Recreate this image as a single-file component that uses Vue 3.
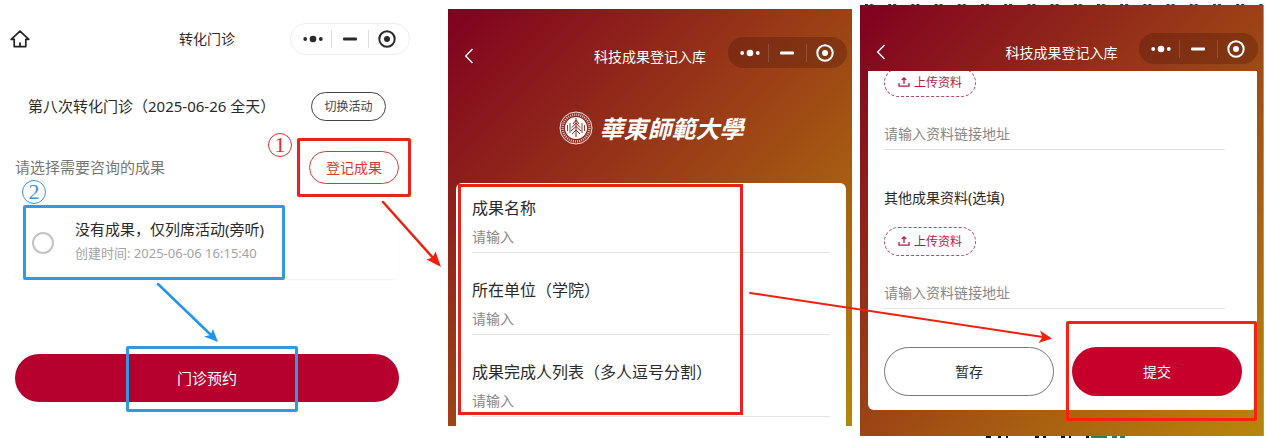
<script setup>
import { ref } from 'vue';

const attend = ref(false);

// Second screen: the form fields
const fields = ref([
  { id: 'name', label: '成果名称', value: '' },
  { id: 'unit', label: '所在单位（学院）', value: '' },
  { id: 'members', label: '成果完成人列表（多人逗号分割）', value: '' },
]);

const link = ref('');
const otherLink = ref('');
</script>

<template>
  <div class="board">
    <!-- Shared icons -->
    <svg class="sprite" aria-hidden="true">
      <symbol id="dots" viewBox="0 0 20 10">
        <circle cx="2.2" cy="5" r="1.9" fill="currentColor" />
        <circle cx="10" cy="5" r="3.3" fill="currentColor" />
        <circle cx="17.8" cy="5" r="1.9" fill="currentColor" />
      </symbol>
      <symbol id="minus" viewBox="0 0 14 4">
        <rect width="14" height="3" y=".5" rx="1" fill="currentColor" />
      </symbol>
      <symbol id="target" viewBox="0 0 18 18">
        <circle cx="9" cy="9" r="7.7" fill="none" stroke="currentColor" stroke-width="2" />
        <circle cx="9" cy="9" r="3" fill="currentColor" />
      </symbol>
      <symbol id="back" viewBox="0 0 10 16">
        <path d="M8.500 1L1.700 8l6.800 7" fill="none" stroke="currentColor" stroke-width="1.4" />
      </symbol>
      <symbol id="upload" viewBox="0 0 12 12">
        <path d="M1 7v3.2h10V7M6 8V2M3.8 4L6 1.8 8.2 4" fill="none" stroke="currentColor" stroke-width="1.3" />
      </symbol>
    </svg>

    <!-- Clinic screen -->
    <section class="screen clinic">
      <header class="nav">
        <button class="nav-icon" aria-label="首页">
          <svg width="20" height="18" viewBox="0 0 20 18">
            <path d="M10 1.2L1.2 9.3h3V16.6h11.6V9.3h3z" fill="none" stroke="#222" stroke-width="1.7" stroke-linejoin="round" />
            <path d="M10 12.5v4" stroke="#222" stroke-width="1.8" />
          </svg>
        </button>
        <h1 class="nav-title">转化门诊</h1>
        <div class="capsule">
          <button aria-label="更多"><svg width="20" height="10"><use href="#dots" /></svg></button>
          <button aria-label="最小化"><svg width="14" height="4"><use href="#minus" /></svg></button>
          <button aria-label="关闭"><svg width="18" height="18"><use href="#target" /></svg></button>
        </div>
      </header>

      <div class="event">
        <h2 class="event-title">第八次转化门诊（2025-06-26 全天）</h2>
        <button class="pill switch">切换活动</button>
      </div>

      <div class="choose">
        <span class="choose-label">请选择需要咨询的成果</span>
        <div class="marked">
          <button class="pill register">登记成果</button>
          <span class="mark mark-register"></span>
          <span class="step step-one">1</span>
        </div>
      </div>

      <label class="option">
        <input v-model="attend" type="radio" :value="true" name="result">
        <span class="option-text">
          <span class="option-title">没有成果，仅列席活动(旁听)</span>
          <span class="option-time">创建时间: 2025-06-06 16:15:40</span>
        </span>
        <span class="mark mark-option"></span>
        <span class="step step-two">2</span>
      </label>

      <div class="marked book">
        <button class="book-button">门诊预约</button>
        <span class="mark mark-book"></span>
      </div>
    </section>

    <!-- Registration screen, top of the form -->
    <section class="screen themed form-top">
      <header class="nav">
        <button class="nav-icon" aria-label="返回"><svg width="10" height="16"><use href="#back" /></svg></button>
        <h1 class="nav-title">科技成果登记入库</h1>
        <div class="capsule">
          <button aria-label="更多"><svg width="20" height="10"><use href="#dots" /></svg></button>
          <button aria-label="最小化"><svg width="14" height="4"><use href="#minus" /></svg></button>
          <button aria-label="关闭"><svg width="18" height="18"><use href="#target" /></svg></button>
        </div>
      </header>

      <div class="brand">
        <svg width="34" height="34" viewBox="0 0 34 34" fill="none" stroke="#fff">
          <circle cx="17" cy="17" r="16" stroke-width=".9" />
          <circle cx="17" cy="17" r="13.4" stroke-width="2.4" stroke-dasharray="1 1.1" opacity=".75" />
          <circle cx="17" cy="17" r="11" fill="#fff" stroke="none" />
          <g stroke="#8e2219" stroke-width="1">
            <path d="M17 7v19M17 9l-3 4M17 9l3 4M17 12l-4 4.500M17 12l4 4.500M17 15.500l-5 4.500M17 15.500l5 4.500M17 19l-4 4M17 19l4 4" />
            <path d="M11 12v10M23 12v10M8.500 14v6M25.500 14v6" stroke-width=".9" />
          </g>
        </svg>
        <span class="brand-name">華東師範大學</span>
      </div>

      <form class="card fields" @submit.prevent>
        <div v-for="field in fields" :key="field.id" class="field">
          <label :for="field.id">{{ field.label }}</label>
          <input :id="field.id" v-model="field.value" type="text" placeholder="请输入">
        </div>
        <span class="mark mark-fields"></span>
      </form>
    </section>

    <!-- Registration screen, end of the form -->
    <div class="last">
      <!-- Edge of the ruler above the screen -->
      <svg class="ruler" aria-hidden="true">
        <defs>
          <pattern id="ticks" x="5" width="23.200" height="5" patternUnits="userSpaceOnUse">
            <path d="M0 4.500h3M5 4.500h3" stroke="#333" stroke-width="1" />
          </pattern>
        </defs>
        <rect width="100%" height="5" fill="url(#ticks)" />
      </svg>
      <section class="screen themed form-end">
        <header class="nav">
          <button class="nav-icon" aria-label="返回"><svg width="10" height="16"><use href="#back" /></svg></button>
          <h1 class="nav-title">科技成果登记入库</h1>
          <div class="capsule">
            <button aria-label="更多"><svg width="20" height="10"><use href="#dots" /></svg></button>
            <button aria-label="最小化"><svg width="14" height="4"><use href="#minus" /></svg></button>
            <button aria-label="关闭"><svg width="18" height="18"><use href="#target" /></svg></button>
          </div>
        </header>

        <form class="card uploads" @submit.prevent>
          <div class="scroll">
            <button type="button" class="upload">
              <svg width="12" height="12"><use href="#upload" /></svg>上传资料
            </button>
            <input v-model="link" type="text" aria-label="资料链接地址" placeholder="请输入资料链接地址">
            <label for="other">其他成果资料(选填)</label>
            <button type="button" class="upload">
              <svg width="12" height="12"><use href="#upload" /></svg>上传资料
            </button>
            <input id="other" v-model="otherLink" type="text" placeholder="请输入资料链接地址">
          </div>
          <div class="actions">
            <button type="button" class="save">暂存</button>
            <div class="marked">
              <button type="submit" class="submit">提交</button>
              <span class="mark mark-submit"></span>
            </div>
          </div>
        </form>
      </section>
      <!-- Top edge of what lies below the screen -->
      <svg class="below" viewBox="0 0 404 2" aria-hidden="true">
        <path d="M126 1h5M138 1h3M146 1h2M175 1h4M183 1h3M201 1h4M209 1h2M226 1h3" stroke="#111" stroke-width="2" />
        <path d="M231 1h16M252 1h5M260 1h5" stroke="#1f8a45" stroke-width="2" />
      </svg>
    </div>

    <!-- Arrows between the steps -->
    <svg class="arrows" viewBox="0 0 1266 438" preserveAspectRatio="none" aria-hidden="true">
      <g stroke="#f0200f" fill="#f0200f">
        <path d="M383 202L434 259" stroke-width="2.500" stroke-linecap="round" />
        <path d="M441 267L426.500 259.500 432.500 257.500 435.500 251.500z" stroke="none" />
        <path d="M750 293L1043 337" stroke-width="2" stroke-linecap="round" />
        <path d="M1052 338.500L1038.500 343 1042.500 337 1040 330.500z" stroke="none" />
      </g>
      <g stroke="#2196e8" fill="#2196e8">
        <path d="M158 284L211 335" stroke-width="2.500" stroke-linecap="round" />
        <path d="M218 342L204 336.500 210.500 335 213 329z" stroke="none" />
      </g>
    </svg>
  </div>
</template>

<style>
body {
  margin: 0;
  background: #fff;
}
</style>

<style scoped>
.board {
  position: relative;
  display: grid;
  grid-template-columns: minmax(0, 440fr) minmax(0, 404fr) minmax(0, 404fr);
  gap: 8px;
  align-items: start;
  padding-right: 2px;
  overflow: hidden;
  font-family: "Noto Sans", "Noto Sans CJK SC", sans-serif;
  font-weight: 400;
  color: #2a2a2a;
}

.board * {
  box-sizing: border-box;
}

.sprite {
  position: absolute;
  width: 0;
  height: 0;
}

button {
  padding: 0 0 2px;
  border: none;
  background: none;
  color: inherit;
  font-family: inherit;
  white-space: nowrap;
  cursor: pointer;
}

svg {
  display: block;
}

/* Navigation bar */
.nav {
  display: grid;
  grid-template-columns: 1fr auto 1fr;
  align-items: center;
  height: 32px;
}

.nav-icon {
  justify-self: start;
  padding: 0;
}

.nav-title {
  margin: 0;
  font-size: 14px;
  line-height: 20px;
  font-weight: 400;
}

.capsule {
  justify-self: end;
  display: grid;
  grid-template-columns: repeat(3, 1fr);
  align-items: center;
  width: 120px;
  height: 32px;
  padding: 0 4px 0 3px;
  border: 1px solid #eee;
  border-radius: 16px;
}

.capsule button {
  display: flex;
  justify-content: center;
  align-items: center;
  height: 18px;
  padding: 0;
}

.capsule button + button {
  border-left: 1px solid #ddd;
}

/* Red and blue frames over the screens */
.marked {
  position: relative;
}

.mark {
  position: absolute;
  border: 3px solid #e8231c;
  border-radius: 2px;
  pointer-events: none;
}

.step {
  position: absolute;
  width: 24px;
  height: 24px;
  border: 1px solid currentColor;
  border-radius: 50%;
  font-family: "Liberation Serif", serif;
  font-size: 22px;
  line-height: 22px;
  text-align: center;
}

/* Clinic screen */
.clinic {
  padding: 23px 41px 0 15px;
}

.clinic .nav {
  margin: 0 -11px;
}

.clinic .nav-icon {
  margin-left: 6px;
}

.event {
  display: flex;
  justify-content: space-between;
  align-items: center;
  margin-top: 37px;
  padding: 0 13px;
}

.event-title {
  margin: 0;
  padding-bottom: 2px;
  font-size: 15px;
  line-height: 20px;
  font-weight: 400;
  white-space: nowrap;
}

.pill {
  border: 1px solid currentColor;
  border-radius: 17px;
}

.switch {
  width: 75px;
  height: 29px;
  font-size: 12px;
  color: #444;
}

.choose {
  display: flex;
  justify-content: space-between;
  align-items: center;
  margin-top: 30px;
}

.choose-label {
  padding-bottom: 2px;
  font-size: 15px;
  line-height: 20px;
  color: #777;
}

.register {
  display: block;
  width: 90px;
  height: 33px;
  font-size: 14px;
  color: #d93a30;
}

.mark-register {
  inset: -13px -12px;
}

.step-one {
  left: -41px;
  top: -18px;
  color: #d9302a;
}

.option {
  position: relative;
  display: flex;
  align-items: center;
  gap: 21px;
  height: 72px;
  margin-top: 23px;
  padding-left: 17px;
  border-radius: 6px;
  box-shadow: 0 1px 2px rgba(0, 0, 0, 0.06);
}

.option input {
  appearance: none;
  width: 22px;
  height: 22px;
  margin: 0;
  border: 2px solid #c4c4c4;
  border-radius: 50%;
}

.option input:checked {
  border: 6px solid #b6002d;
}

.option-text {
  display: flex;
  flex-direction: column;
  gap: 4px;
  padding-bottom: 4px;
  white-space: nowrap;
}

.option-title {
  font-size: 15px;
  line-height: 20px;
}

.option-time {
  font-size: 13px;
  line-height: 20px;
  color: #a3a3a3;
}

.mark-option {
  left: 8px;
  top: -2px;
  width: 262px;
  height: 75px;
  border-color: #3298e0;
}

.step-two {
  left: 7px;
  top: -27px;
  color: #3a93d8;
}

.book {
  margin-top: 75px;
}

.book-button {
  display: block;
  width: 100%;
  height: 48px;
  border-radius: 24px;
  background: #b6002d;
  color: #fff;
  font-size: 15px;
}

.mark-book {
  left: 29%;
  top: -8px;
  width: 172px;
  height: 66px;
  border-color: #3298e0;
}

/* Registration screens */
.themed {
  background: linear-gradient(135deg, #800020, #b8860b);
}

.themed .nav {
  height: 31px;
  margin: 0 -1px 0 -3px;
  color: #fff;
}

.themed .nav-icon {
  margin-left: 11px;
  padding-top: 6px;
}

.themed .nav-title {
  padding-top: 8px;
}

.themed .capsule {
  width: 119px;
  height: 31px;
  border: none;
  background: rgba(70, 20, 10, 0.3);
}

.themed .capsule button + button {
  border-color: rgba(255, 255, 255, 0.15);
}

.card {
  position: relative;
  background: #fff;
}

.card input {
  display: block;
  width: 100%;
  padding: 0;
  border: none;
  border-bottom: 1px solid #e3e3e3;
  outline: none;
  background: none;
  font-family: inherit;
  font-size: 14px;
}

.card input::placeholder {
  color: #888;
  opacity: 1;
}

.form-top {
  margin-top: 9px;
  padding: 28px 6px 0 8px;
}

.brand {
  display: flex;
  justify-content: center;
  align-items: center;
  gap: 7px;
  height: 34px;
  margin: 43px 0 38px;
}

.brand-name {
  font-family: "Noto Sans CJK TC", sans-serif;
  font-size: 24px;
  line-height: 34px;
  font-weight: 700;
  font-style: italic;
  color: #fff;
}

.fields {
  padding: 13px 16px 9px;
  border-radius: 6px 6px 0 0;
}

.field + .field {
  margin-top: 25px;
}

.field label {
  display: block;
  font-size: 16px;
  line-height: 24px;
}

.field input {
  height: 33px;
}

.mark-fields {
  inset: 1px 103px 11px 2px;
  border-radius: 0;
}

.last {
  min-width: 0;
}

.ruler {
  width: 100%;
  height: 5px;
}

.form-end {
  padding: 28px 6px 26px 8px;
  border-right: 1px solid #999;
}

.uploads {
  margin-top: 7px;
  padding-bottom: 14px;
  border-radius: 0 0 6px 6px;
}

.scroll {
  padding: 0 32px 0 16px;
  overflow: hidden;
}

.scroll label {
  display: block;
  margin: 38px 0 19px;
  font-size: 14px;
  line-height: 20px;
}

.scroll input {
  height: 32px;
  margin-top: 21px;
}

.upload {
  display: flex;
  justify-content: center;
  align-items: center;
  gap: 4px;
  width: 92px;
  height: 29px;
  border: 1px dashed #b6436a;
  border-radius: 15px;
  color: #a81e4c;
  font-size: 12px;
}

.upload:first-child {
  margin-top: -3px;
}

.actions {
  display: grid;
  grid-template-columns: 1fr 1fr;
  gap: 18px;
  margin-top: 38px;
  padding: 0 15px 0 16px;
}

.save,
.submit {
  display: block;
  width: 100%;
  height: 49px;
  border-radius: 25px;
  font-size: 14px;
}

.save {
  border: 1px solid #777;
}

.submit {
  background: #c7002b;
  color: #fff;
}

.mark-submit {
  inset: -26px -15px -25px -6px;
  border-color: #f8200f;
}

.below {
  width: 100%;
  height: 2px;
}

.arrows {
  position: absolute;
  left: 0;
  top: 0;
  width: 100%;
  height: 438px;
  pointer-events: none;
}
</style>
